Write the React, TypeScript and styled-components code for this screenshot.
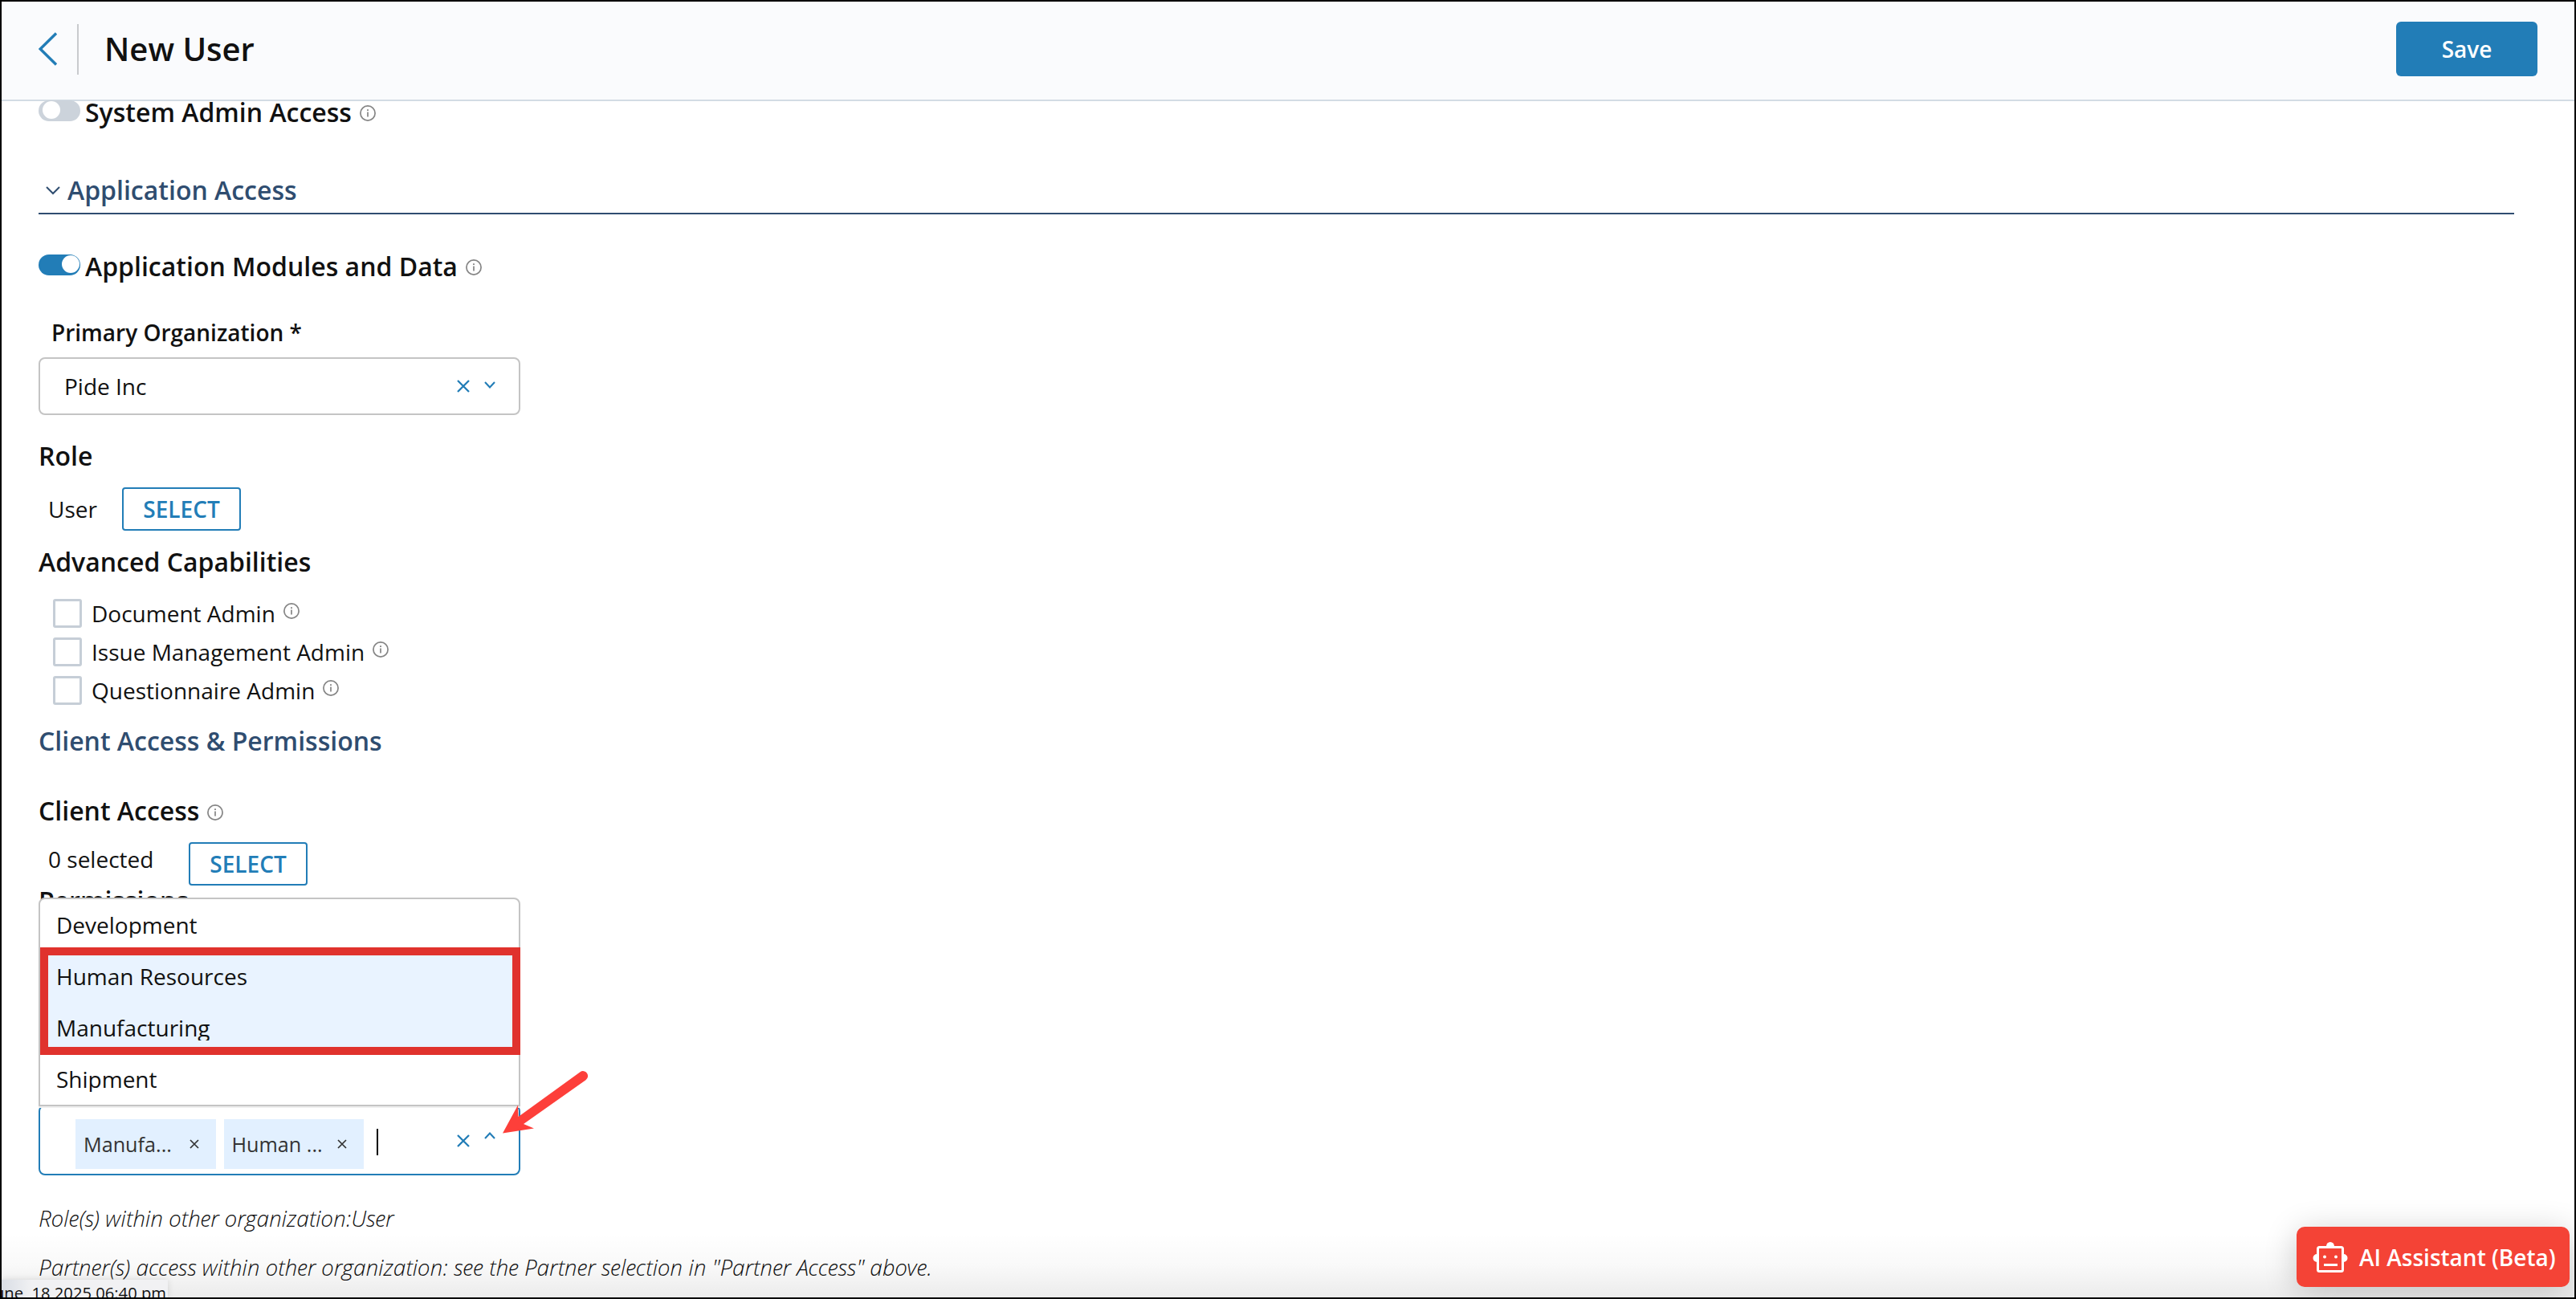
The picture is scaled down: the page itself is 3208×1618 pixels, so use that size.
import React, { useState } from 'react';
import styled, { createGlobalStyle, css } from 'styled-components';

const blue = '#227db7';
const navy = '#2f4d70';

const InfoIcon: React.FC = () => (
  <svg width="20" height="20" viewBox="0 0 20 20" fill="none">
    <circle cx="10" cy="10" r="9.1" stroke="#858585" strokeWidth="1.7" />
    <path d="M10 8.6V14.6" stroke="#858585" strokeWidth="1.7" />
    <path d="M10 5.2V7" stroke="#858585" strokeWidth="1.9" />
  </svg>
);

const ClearIcon: React.FC = () => (
  <svg width="16" height="16" viewBox="0 0 16 16" fill="none">
    <path d="M1 1L15 15M15 1L1 15" stroke={blue} strokeWidth="2.3" />
  </svg>
);

const Chevron: React.FC<{ up?: boolean }> = ({ up }) => (
  <svg width="14" height="9" viewBox="0 0 14 9" fill="none">
    <path d={up ? 'M1 8L7 1.6L13 8' : 'M1 1L7 7.4L13 1'} stroke={blue} strokeWidth="2.1" />
  </svg>
);

const capabilities = ['Document Admin', 'Issue Management Admin', 'Questionnaire Admin'];
const permissions = ['Development', 'Human Resources', 'Manufacturing', 'Shipment'];

const App: React.FC = () => {
  const [systemAdmin, setSystemAdmin] = useState(false);
  const [modules, setModules] = useState(true);
  const [selected] = useState(['Manufacturing', 'Human Resources']);

  return (
    <Page>
      <GlobalStyle />
      <Header>
        <BackButton aria-label="Back">
          <svg width="24" height="42" viewBox="0 0 24 42" fill="none">
            <path d="M22 1.5L2.2 21L22 40.5" stroke={blue} strokeWidth="3.4" />
          </svg>
        </BackButton>
        <HeaderDivider />
        <Title>New User</Title>
        <SaveButton>Save</SaveButton>
      </Header>

      <Content>
        <ToggleRow>
          <Toggle $on={systemAdmin} onClick={() => setSystemAdmin(!systemAdmin)} />
          <Heading>System Admin Access</Heading>
          <InfoIcon />
        </ToggleRow>

        <Section>
          <svg width="18" height="11" viewBox="0 0 18 11" fill="none">
            <path d="M1 1L9 9L17 1" stroke={navy} strokeWidth="2" />
          </svg>
          <Heading $color={navy}>Application Access</Heading>
        </Section>

        <ToggleRow $top={43}>
          <Toggle $on={modules} onClick={() => setModules(!modules)} />
          <Heading>Application Modules and Data</Heading>
          <InfoIcon />
        </ToggleRow>

        <FieldLabel>Primary Organization *</FieldLabel>
        <SelectBox>
          <SelectValue>Pide Inc</SelectValue>
          <Indicators>
            <ClearIcon />
            <Chevron />
          </Indicators>
        </SelectBox>

        <RoleHeading>Role</RoleHeading>
        <ValueRow>
          <Value $width={92}>User</Value>
          <SelectButton>SELECT</SelectButton>
        </ValueRow>

        <CapabilitiesHeading>Advanced Capabilities</CapabilitiesHeading>
        <Capabilities>
          {capabilities.map((name) => (
            <Capability key={name}>
              <Checkbox />
              <span>{name}</span>
              <InfoIcon />
            </Capability>
          ))}
        </Capabilities>

        <ClientHeading $color={navy}>Client Access &amp; Permissions</ClientHeading>
        <AccessRow>
          <Heading>Client Access</Heading>
          <InfoIcon />
        </AccessRow>
        <ValueRow>
          <Value $width={175} $lift>0 selected</Value>
          <SelectButton>SELECT</SelectButton>
        </ValueRow>

        <PermissionsHeading>Permissions</PermissionsHeading>
        <MultiSelect>
          <Menu>
            {permissions.map((name) => (
              <Option key={name} $selected={selected.includes(name)}>
                <span>{name}</span>
              </Option>
            ))}
            <Highlight />
          </Menu>
          {selected.map((name) => (
            <Chip key={name}>
              {name.slice(0, 6)}...
              <svg width="12" height="12" viewBox="0 0 12 12" fill="none">
                <path d="M1 1L11 11M11 1L1 11" stroke="#333" strokeWidth="1.7" />
              </svg>
            </Chip>
          ))}
          <Caret />
          <Indicators $open>
            <ClearIcon />
            <Chevron up />
          </Indicators>
          <Arrow width="112" height="86" viewBox="0 0 112 86">
            <path
              d="M0 79.500L19 44.500L19.500 59L96.500 3.200A6 6 0 0 1 103.500 13.200L26 68L39 73.500Z"
              fill="#fd3f3a"
            />
          </Arrow>
        </MultiSelect>

        <Notes>
          <Note>Role(s) within other organization:User</Note>
          <Note>Partner(s) access within other organization: see the Partner selection in "Partner Access" above.</Note>
        </Notes>
      </Content>

      <BottomShade />
      <StatusBubble>
        <span>June, 18 2025 06:40 pm</span>
      </StatusBubble>
      <Assistant>
        <svg width="44" height="38" viewBox="0 0 44 38" fill="none">
          <rect x="6.500" y="6.500" width="31" height="30" rx="2" stroke="#fff" strokeWidth="3" />
          <path d="M17 5.500a5 5.500 0 0 1 10 0z" fill="#fff" />
          <path d="M5.500 15a5 5 0 0 0 0 10zM38.500 15a5 5 0 0 1 0 10z" fill="#fff" />
          <circle cx="15" cy="18.500" r="2" fill="#fff" />
          <circle cx="29" cy="18.500" r="2" fill="#fff" />
          <path d="M14 28.500H31" stroke="#fff" strokeWidth="3" />
        </svg>
        AI Assistant (Beta)
      </Assistant>
    </Page>
  );
};

export default App;

// Estilos

const GlobalStyle = createGlobalStyle`
  * {
    box-sizing: border-box;
  }
  body {
    margin: 0;
    font-family: 'Open Sans', 'Noto Sans', sans-serif;
    font-size: 28px;
    color: #111;
  }
  button {
    font-family: inherit;
    cursor: pointer;
  }
  svg {
    flex-shrink: 0;
  }
`;

const Page = styled.div`
  position: relative;
  width: 3208px;
  height: 1618px;
  overflow: hidden;
  background: #fff;
  border: 2px solid #000;
`;

const Header = styled.header`
  display: flex;
  align-items: center;
  height: 124px;
  padding: 0 46px 4px;
  background: #fafbfd;
  border-bottom: 2px solid #d3dce4;
`;

const BackButton = styled.button`
  display: flex;
  padding: 0;
  border: none;
  background: none;
`;

const HeaderDivider = styled.div`
  width: 2px;
  height: 63px;
  margin: 0 32px 0 24px;
  background: #c9cbce;
`;

const Title = styled.h1`
  flex: 1;
  margin: 0;
  font-size: 40px;
  font-weight: 600;
  line-height: 54px;
`;

const SaveButton = styled.button`
  width: 176px;
  height: 68px;
  border: none;
  border-radius: 6px;
  background: ${blue};
  color: #fff;
  font-size: 28px;
  font-weight: 600;
`;

const Content = styled.main`
  padding: 0 75px 0 46px;
`;

const Heading = styled.h2<{ $color?: string }>`
  margin: 0;
  font-size: 32px;
  font-weight: 600;
  line-height: 44px;
  color: ${({ $color }) => $color || '#111'};
`;

const ToggleRow = styled.div<{ $top?: number }>`
  display: flex;
  align-items: center;
  height: 44px;
  margin-top: ${({ $top = -8 }) => $top}px;

  h2 {
    margin: 0 10px 0 6px;
  }
  svg {
    margin-top: 2px;
  }
`;

const Toggle = styled.button<{ $on: boolean }>`
  display: flex;
  justify-content: ${({ $on }) => ($on ? 'flex-end' : 'flex-start')};
  width: 52px;
  height: 26px;
  margin-bottom: 4px;
  padding: 1px ${({ $on }) => ($on ? 1 : 5)}px;
  border: none;
  border-radius: 13px;
  background: ${({ $on }) => ($on ? blue : '#ccd3db')};

  &::before {
    content: '';
    width: 22px;
    height: 22px;
    border-radius: 50%;
    background: #fff;
  }
`;

const Section = styled.div`
  display: flex;
  align-items: center;
  gap: 9px;
  height: 52px;
  margin-top: 53px;
  padding: 0 0 6px 9px;
  border-bottom: 2px solid ${navy};
`;

const FieldLabel = styled.label`
  display: block;
  margin: 41px 0 0 16px;
  font-weight: 600;
  line-height: 38px;
`;

const box = css`
  display: flex;
  align-items: center;
  width: 600px;
  border: 2px solid #c4c4c4;
  border-radius: 8px;
`;

const SelectBox = styled.div`
  ${box}
  height: 72px;
  margin-top: 12px;
  padding: 0 29px 0 30px;
`;

const SelectValue = styled.span`
  flex: 1;
`;

const Indicators = styled.div<{ $open?: boolean }>`
  display: flex;
  align-items: center;
  gap: 18px;
  margin-left: auto;
  margin-bottom: ${({ $open }) => ($open ? 8 : 0)}px;

  svg:last-child {
    margin-bottom: ${({ $open }) => ($open ? 13 : 4)}px;
  }
`;

const RoleHeading = styled(Heading)`
  margin-top: 29px;
`;

const ValueRow = styled.div`
  display: flex;
  align-items: center;
  margin-top: 17px;
  padding-left: 12px;
`;

const Value = styled.span<{ $width: number; $lift?: boolean }>`
  width: ${({ $width }) => $width}px;
  line-height: 38px;
  padding-bottom: ${({ $lift }) => ($lift ? 12 : 0)}px;
`;

const SelectButton = styled.button`
  width: 148px;
  height: 54px;
  padding: 0;
  border: 2px solid ${blue};
  border-radius: 4px;
  background: #fff;
  color: ${blue};
  font-size: 28px;
  font-weight: 600;
`;

const CapabilitiesHeading = styled(Heading)`
  margin-top: 17px;
`;

const Capabilities = styled.div`
  padding: 18px 0 0 18px;
`;

const Capability = styled.label`
  display: flex;
  align-items: center;
  height: 48px;

  span {
    margin: 0 10px 0 12px;
  }
  svg {
    margin-bottom: 6px;
  }
`;

const Checkbox = styled.input.attrs({ type: 'checkbox' })`
  appearance: none;
  width: 36px;
  height: 36px;
  margin: 0;
  border: 3px solid #c6ced7;
  border-radius: 3px;
`;

const ClientHeading = styled(Heading)`
  margin-top: 17px;
`;

const AccessRow = styled.div`
  display: flex;
  align-items: center;
  gap: 10px;
  margin-top: 43px;

  svg {
    margin-top: 4px;
  }
`;

const PermissionsHeading = styled(Heading)`
  margin-top: -3px;
`;

const MultiSelect = styled.div`
  ${box}
  position: relative;
  height: 88px;
  margin-top: 232px;
  padding: 10px 29px 0 44px;
  border-color: ${blue};
`;

// abre acima do campo
const Menu = styled.div`
  position: absolute;
  left: -2px;
  bottom: 84px;
  width: 600px;
  border: 2px solid #c4c4c4;
  border-radius: 8px 8px 0 0;
  background: #fff;
  box-shadow: 0 2px 0 #efefef;
`;

const Option = styled.div<{ $selected: boolean }>`
  height: 64px;
  padding: 14px 20px;
  background: ${({ $selected }) => ($selected ? '#e9f3ff' : 'transparent')};

  span {
    display: block;
    height: 34px;
    line-height: 36px;
    overflow: hidden;
  }
`;

const Highlight = styled.div`
  position: absolute;
  left: 0;
  top: 60px;
  width: 598px;
  height: 134px;
  border: 10px solid #e0322d;
`;

const Chip = styled.div`
  display: flex;
  align-items: center;
  justify-content: space-between;
  width: 174.5px;
  height: 62px;
  margin-right: 10px;
  padding: 0 21px 0 10px;
  background: #e2f0ff;
  color: #333;
  font-size: 25.2px;
`;

const Caret = styled.div`
  width: 2px;
  height: 33px;
  margin: 0 0 5px 6px;
  background: #000;
`;

const Arrow = styled.svg`
  position: absolute;
  left: 576px;
  top: -46px;
`;

const Notes = styled.div`
  padding-top: 11px;
`;

const Note = styled.p`
  margin: 0;
  padding-top: 23px;
  font-family: 'Open Sans Light', 'Open Sans', sans-serif;
  font-style: italic;
  font-weight: 300;
  line-height: 38px;
`;

const BottomShade = styled.div`
  position: absolute;
  left: 0;
  right: 0;
  bottom: 0;
  height: 80px;
  background: linear-gradient(rgba(0, 0, 0, 0), rgba(0, 0, 0, 0.025) 50%, rgba(0, 0, 0, 0.08));
`;

const StatusBubble = styled.div`
  position: absolute;
  left: 0;
  bottom: 0;
  display: flex;
  justify-content: flex-end;
  width: 207px;
  height: 22px;
  padding-right: 2px;
  overflow: hidden;
  background: linear-gradient(90deg, #d8dde5, #f1f1f3 18%);
  box-shadow: 0 0 8px rgba(0, 0, 0, 0.12);
  font-size: 20.2px;
  line-height: 33px;
  white-space: nowrap;
`;

const Assistant = styled.button`
  position: absolute;
  right: 6px;
  bottom: 13px;
  display: flex;
  align-items: center;
  gap: 14px;
  width: 340px;
  height: 75px;
  padding: 0 0 0 20px;
  border: none;
  border-radius: 10px;
  background: #f44336;
  box-shadow: 0 6px 40px rgba(0, 0, 0, 0.2);
  color: #fff;
  font-size: 28px;
  font-weight: 600;
  white-space: nowrap;
`;
